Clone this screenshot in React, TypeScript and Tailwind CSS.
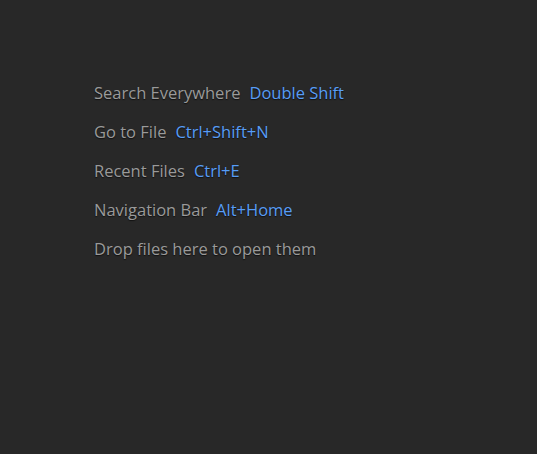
const rows: [string, string][] = [
  ["Search Everywhere", "Double Shift"],
  ["Go to File", "Ctrl+Shift+N"],
  ["Recent Files", "Ctrl+E"],
  ["Navigation Bar", "Alt+Home"],
]

export default function App() {
  return (
    <div className="w-[537px] h-[454px] bg-[#282828] pt-[73px] pl-[94px] font-['Open_Sans',sans-serif] text-[16.5px] [text-shadow:0_1px_1px_#111]">
      <div className="flex flex-col">
        {rows.map(([label, keys]) => (
          <div key={label} className="h-[39px] leading-[39px] flex gap-[9px] whitespace-nowrap">
            <span className="text-[#9a9a9a]">{label}</span>
            <span className="text-[#589df6]">{keys}</span>
          </div>
        ))}
        <div className="h-[39px] leading-[39px] text-[#9a9a9a] whitespace-nowrap">Drop files here to open them</div>
      </div>
    </div>
  )
}
